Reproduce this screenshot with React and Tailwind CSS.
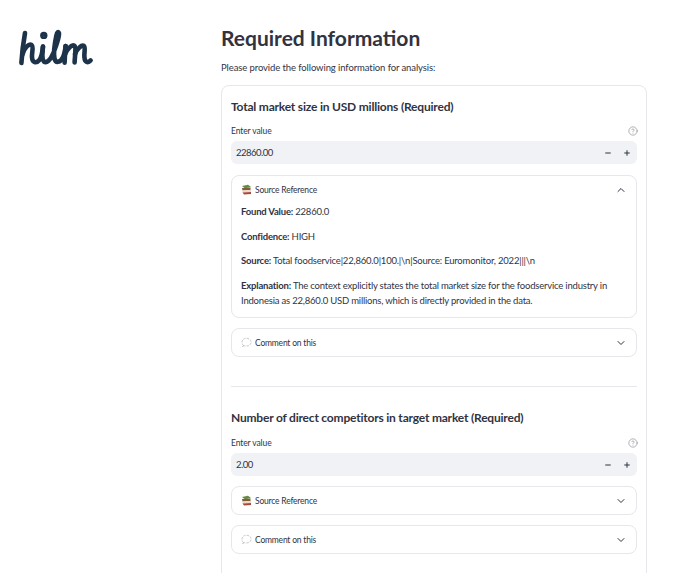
import React from "react";
import { ChevronUp, ChevronDown, Minus, Plus, CircleHelp } from "lucide-react";

const Books = () => (
  <svg width="11" height="11" viewBox="0 0 11 11" className="shrink-0">
    <path d="M1 2 L7 0.8 L10 3 L4 4.2 Z" fill="#5f8f3e" />
    <path d="M1 4 L9.5 3.4 L9.5 6 L1.5 6.4 Z" fill="#8a5a3c" />
    <path d="M1 6.6 L10 6 L10 8 L2 8.8 Z" fill="#e8dcc8" />
    <path d="M1.5 8.6 L10 8 L10 10 L3 10.5 Z" fill="#a8483c" />
  </svg>
);

const Bubble = () => (
  <svg width="11" height="11" viewBox="0 0 11 11" className="shrink-0" fill="none">
    <path d="M2.6 8.6 C0.6 7.2 0.4 3.8 2.4 2.2 C4.4 0.8 7.6 1 9.2 2.8 C10.8 4.8 10 7.6 7.6 8.6 C6.4 9 4.4 9.1 3.4 8.7 L1.2 9.8 Z" fill="#ffffff" stroke="#b4b8bd" strokeWidth="0.8" strokeDasharray="2.4 1.1" />
  </svg>
);

const Expander = ({ icon, label, open, children, className }) => (
  <div className={`border border-[#e6e7ea] rounded-lg ${className || ""}`}>
    <div className="h-[27px] flex items-center pl-[9px] pr-[9px] justify-between">
      <div className="flex items-center gap-[3px] text-[8.5px] tracking-[-0.2px] text-[#31333f]">
        {icon}
        <span className="pt-[1px]">{label}</span>
      </div>
      {open ? <ChevronUp size={12} strokeWidth={2} color="#31333f" /> : <ChevronDown size={12} strokeWidth={2} color="#31333f" />}
    </div>
    {children}
  </div>
);

const NumberField = ({ value }) => (
  <div>
    <div className="h-[14px] flex items-center justify-between text-[8.5px] tracking-[-0.1px] text-[#31333f] mb-[3px]">
      <span>Enter value</span>
      <CircleHelp size={10} strokeWidth={1.4} color="#7b7d85" className="mr-[-1px]" />
    </div>
    <div className="h-[23px] rounded-md bg-[#f0f2f6] flex items-center justify-between pl-[5px] pr-[6px] text-[9.5px] text-[#31333f]">
      <span className="tracking-[-0.5px] pt-[1px]">{value}</span>
      <div className="flex items-center gap-[11px]">
        <Minus size={8} strokeWidth={3} color="#31333f" />
        <Plus size={8} strokeWidth={3} color="#31333f" />
      </div>
    </div>
  </div>
);

const Para = ({ label, children }) => (
  <p className="text-[9.5px] leading-[15px] tracking-[-0.2px] text-[#31333f]">
    <strong className="font-bold">{label}</strong> {children}
  </p>
);

export default function App() {
  return (
    <div className="w-[683px] h-[573px] overflow-hidden bg-white flex font-['Lato',sans-serif]">
      <aside className="w-[221px] shrink-0 pl-[14px] pt-[26px]">
        <svg width="84" height="44" viewBox="14 26 84 44" fill="none" stroke="#1c3349" strokeWidth="4.6" strokeLinecap="round" strokeLinejoin="round">
          <path d="M25 33 C23.4 42 22 52 21.4 63" />
          <path d="M22.2 55 C24.6 47 29 43.4 31.6 45 C33.8 46.6 31.8 52 32 57 C32.2 63 36.4 63.6 39.4 60 C41.6 57 42.6 51 43 46.5" />
          <path d="M43 46.5 C42.4 52 41.4 59 44 61.6 C46.6 63.6 50.4 60 53 54 C56 46 59.4 38 59 33.4 C58.4 31 57 32 56.4 35.6 C54.8 43 53.4 52 54.4 58 C55.4 63.6 60 62.6 62.6 58 C64.4 54.6 65.2 50 65.6 46" />
          <path d="M65.6 46 C65.2 51 64.8 57 64.6 62.6" />
          <path d="M65.2 54 C67.6 48.4 71.6 44.6 74.2 45.6 C76.4 47 75 54 74.6 62.4" />
          <path d="M75 54 C77.4 48.4 81.6 44.6 83.8 45.8 C85.8 47.4 84 52 84.4 57 C84.8 62.6 88 63.2 90.6 60.4" />
          <circle cx="43.8" cy="35.4" r="1.4" fill="#1c3349" />
        </svg>
      </aside>
      <main className="w-[426px] shrink-0">
        <h1 className="mt-[23px] text-[21px] leading-[30px] font-bold text-[#31333f]">Required Information</h1>
        <p className="mt-[8px] text-[9.5px] leading-[14px] tracking-[-0.1px] text-[#31333f]">Please provide the following information for analysis:</p>
        <section className="mt-[10px] border border-[#e6e7ea] rounded-lg px-[9px] pt-[12px] pb-[40px]">
          <h2 className="text-[12px] leading-[18px] font-bold tracking-[-0.2px] text-[#31333f]">Total market size in USD millions (Required)</h2>
          <div className="mt-[8px]">
            <NumberField value="22860.00" />
          </div>
          <Expander icon={<Books />} label="Source Reference" open className="mt-[11px]">
            <div className="px-[9px] pb-[9.5px] flex flex-col gap-[9.5px] pt-[1px]">
              <Para label="Found Value:">22860.0</Para>
              <Para label="Confidence:">HIGH</Para>
              <Para label="Source:">{"Total foodservice|22,860.0|100.|\\n|Source: Euromonitor, 2022|||\\n"}</Para>
              <Para label="Explanation:">The context explicitly states the total market size for the foodservice industry in Indonesia as 22,860.0 USD millions, which is directly provided in the data.</Para>
            </div>
          </Expander>
          <Expander icon={<Bubble />} label="Comment on this" className="mt-[10px]" />
          <hr className="mt-[29px] border-t border-[#e6e7ea]" />
          <h2 className="mt-[22px] text-[12px] leading-[18px] font-bold tracking-[-0.2px] text-[#31333f]">Number of direct competitors in target market (Required)</h2>
          <div className="mt-[9px]">
            <NumberField value="2.00" />
          </div>
          <Expander icon={<Books />} label="Source Reference" className="mt-[10px]" />
          <Expander icon={<Bubble />} label="Comment on this" className="mt-[10px]" />
        </section>
      </main>
    </div>
  );
}
